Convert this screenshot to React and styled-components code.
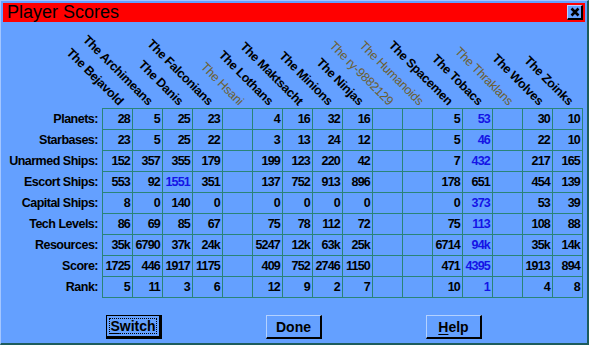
import React from "react";
import styled, { createGlobalStyle } from "styled-components";

const GlobalStyle = createGlobalStyle`
  html, body {
    margin: 0;
    padding: 0;
    background: #64a0ff;
  }
  * {
    box-sizing: border-box;
  }
`;

const players = [
  { name: "The Bejavold" },
  { name: "The Archimeans" },
  { name: "The Danis" },
  { name: "The Falconians" },
  { name: "The Hsani", out: true },
  { name: "The Lothans" },
  { name: "The Maktsacht" },
  { name: "The Minions" },
  { name: "The Ninjas" },
  { name: "The ry-9882129", out: true },
  { name: "The Humanoids", out: true },
  { name: "The Spacemen" },
  { name: "The Tobacs" },
  { name: "The Thraklans", out: true },
  { name: "The Wolves" },
  { name: "The Zoinks" },
];

// blank strings are players no longer in the game
const rows = [
  { label: "Planets:", values: ["28", "5", "25", "23", "", "4", "16", "32", "16", "", "", "5", "53", "", "30", "10"], best: 12 },
  { label: "Starbases:", values: ["23", "5", "25", "22", "", "3", "13", "24", "12", "", "", "5", "46", "", "22", "10"], best: 12 },
  { label: "Unarmed Ships:", values: ["152", "357", "355", "179", "", "199", "123", "220", "42", "", "", "7", "432", "", "217", "165"], best: 12 },
  { label: "Escort Ships:", values: ["553", "92", "1551", "351", "", "137", "752", "913", "896", "", "", "178", "651", "", "454", "139"], best: 2 },
  { label: "Capital Ships:", values: ["8", "0", "140", "0", "", "0", "0", "0", "0", "", "", "0", "373", "", "53", "39"], best: 12 },
  { label: "Tech Levels:", values: ["86", "69", "85", "67", "", "75", "78", "112", "72", "", "", "75", "113", "", "108", "88"], best: 12 },
  { label: "Resources:", values: ["35k", "6790", "37k", "24k", "", "5247", "12k", "63k", "25k", "", "", "6714", "94k", "", "35k", "14k"], best: 12 },
  { label: "Score:", values: ["1725", "446", "1917", "1175", "", "409", "752", "2746", "1150", "", "", "471", "4395", "", "1913", "894"], best: 12 },
  { label: "Rank:", values: ["5", "11", "3", "6", "", "12", "9", "2", "7", "", "", "10", "1", "", "4", "8"], best: 12 },
];

const App = () => {
  return (
    <>
      <GlobalStyle />
      <Window>
        <TitleBar>
          <Title>Player Scores</Title>
          <CloseButton>
            <svg width="10" height="10" viewBox="0 0 10 10">
              <path d="M1.5 1.5 L8.5 8.5 M8.5 1.5 L1.5 8.5" stroke="#000" strokeWidth="2.6" />
            </svg>
          </CloseButton>
        </TitleBar>

        <HeaderRow>
          <Spacer />
          {players.map((p) => (
            <HeaderCell key={p.name}>
              <HeaderText out={p.out}>{p.name}</HeaderText>
            </HeaderCell>
          ))}
        </HeaderRow>

        <Scores>
          <Labels>
            {rows.map((r) => (
              <Label key={r.label}>{r.label}</Label>
            ))}
          </Labels>
          <Grid>
            {rows.map((r) =>
              r.values.map((v, i) => (
                <Cell key={r.label + i} best={i === r.best}>
                  {v}
                </Cell>
              ))
            )}
          </Grid>
        </Scores>

        <ButtonRow>
          <DefaultButton>
            <Focus>
              <u>S</u>witch
            </Focus>
          </DefaultButton>
          <Button>Done</Button>
          <Button>
            <u>H</u>elp
          </Button>
        </ButtonRow>
      </Window>
    </>
  );
};

const Window = styled.div`
  width: 589px;
  height: 345px;
  padding: 2px;
  background: #64a0ff;
  border-top: 1px solid #a4c6ff;
  border-left: 1px solid #a4c6ff;
  border-right: 2px solid #1d5c5c;
  border-bottom: 2px solid #1d5c5c;
  display: flex;
  flex-direction: column;
  font-family: "Liberation Sans", Arial, sans-serif;
`;

const TitleBar = styled.div`
  height: 19px;
  background: #ff0000;
  display: flex;
  align-items: center;
  justify-content: space-between;
  padding: 0 2px 0 4px;
`;

const Title = styled.span`
  font-size: 18px;
  line-height: 19px;
  color: #000;
`;

const CloseButton = styled.div`
  width: 16px;
  height: 15px;
  background: #64a0ff;
  border-top: 1px solid #b4d2ff;
  border-left: 1px solid #b4d2ff;
  border-right: 2px solid #000;
  border-bottom: 2px solid #000;
  display: flex;
  align-items: center;
  justify-content: center;
`;

const HeaderRow = styled.div`
  height: 86px;
  display: flex;
`;

const Spacer = styled.div`
  width: 99px;
  flex-shrink: 0;
`;

const HeaderCell = styled.div`
  width: 30px;
  flex-shrink: 0;
  display: flex;
  justify-content: flex-end;
  align-items: flex-end;
  padding-right: 16px;
`;

const HeaderText = styled.span`
  flex-shrink: 0;
  white-space: nowrap;
  font-size: 12.5px;
  line-height: 13px;
  letter-spacing: -0.3px;
  font-weight: ${(p) => (p.out ? 400 : 700)};
  color: ${(p) => (p.out ? "#6c5f32" : "#000")};
  transform: rotate(45deg);
  transform-origin: 100% 100%;
`;

const Scores = styled.div`
  display: flex;
`;

const Labels = styled.div`
  width: 99px;
  padding-top: 1px;
  display: flex;
  flex-direction: column;
`;

const Label = styled.div`
  height: 21px;
  line-height: 20px;
  text-align: right;
  padding-right: 4px;
  font-size: 12.5px;
  font-weight: 700;
  letter-spacing: -0.5px;
  color: #000;
  white-space: nowrap;
`;

const Grid = styled.div`
  display: grid;
  grid-template-columns: repeat(16, 30px);
  grid-auto-rows: 21px;
  border-top: 1px solid #2a8478;
  border-left: 1px solid #2a8478;
`;

const Cell = styled.div`
  border-right: 1px solid #2a8478;
  border-bottom: 1px solid #2a8478;
  text-align: right;
  padding-right: 2px;
  line-height: 20px;
  font-size: 12.5px;
  font-weight: 700;
  letter-spacing: -0.8px;
  color: ${(p) => (p.best ? "#1414e6" : "#000")};
`;

const ButtonRow = styled.div`
  display: flex;
  gap: 104px;
  margin: 17px 0 0 103px;
`;

const Button = styled.div`
  width: 56px;
  height: 24px;
  border-top: 1px solid #b4d2ff;
  border-left: 1px solid #b4d2ff;
  border-right: 2px solid #000;
  border-bottom: 2px solid #000;
  display: flex;
  align-items: center;
  justify-content: center;
  font-size: 14px;
  font-weight: 700;
  color: #000;

  u {
    text-decoration-thickness: 1px;
    text-underline-offset: 2px;
  }
`;

const DefaultButton = styled(Button)`
  border: 1px solid #000;
  border-right: 3px solid #000;
  border-bottom: 3px solid #000;
  padding: 2px;
`;

const Focus = styled.div`
  width: 100%;
  height: 100%;
  border: 1px dotted #000;
  display: flex;
  align-items: center;
  justify-content: center;
`;

export default App;
